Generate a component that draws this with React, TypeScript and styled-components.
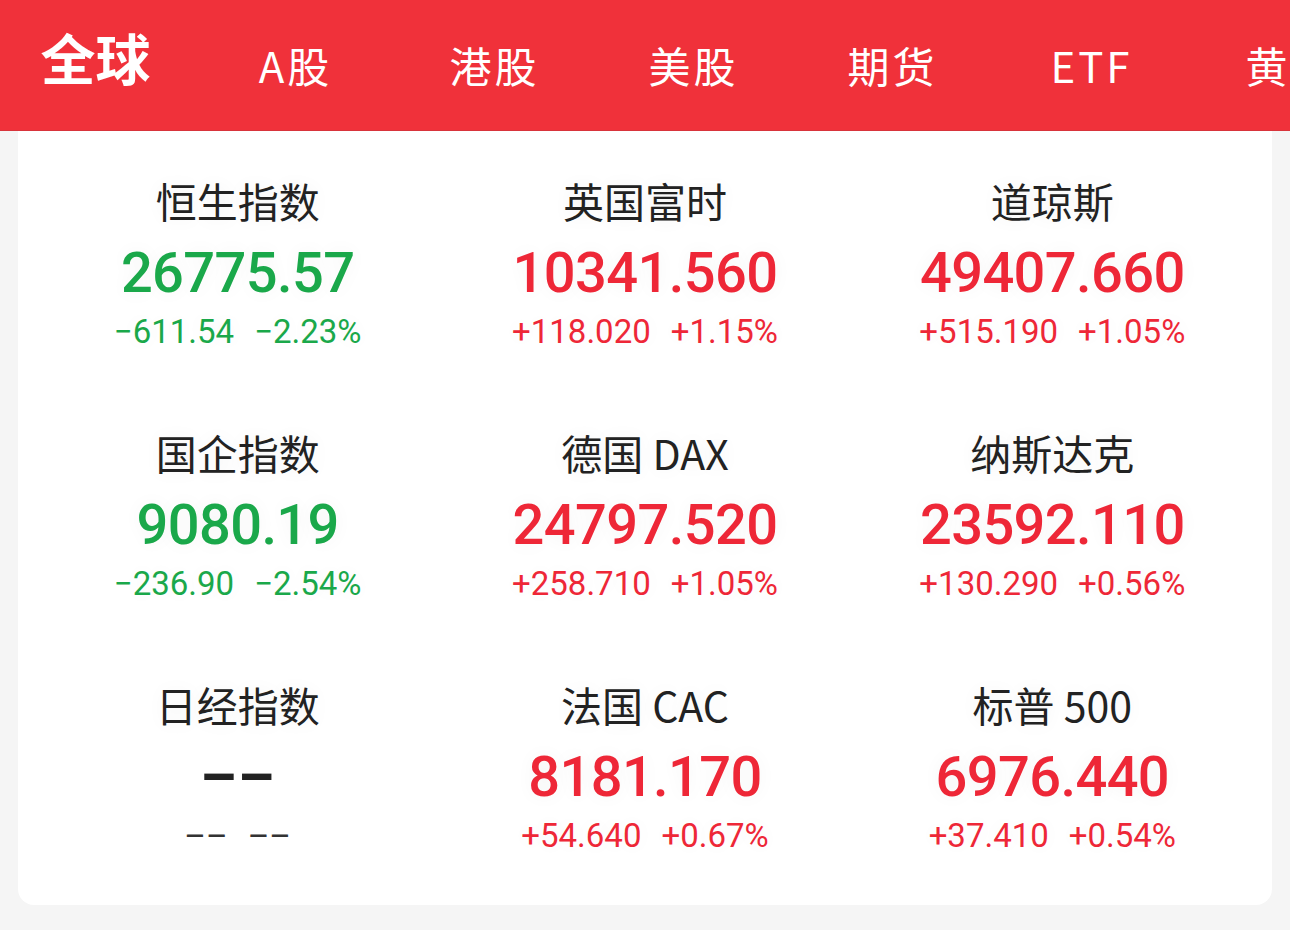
import React from "react";
import styled, { createGlobalStyle } from "styled-components";

const GlobalStyle = createGlobalStyle`
  html, body {
    margin: 0;
    padding: 0;
    background: #f5f5f5;
    font-family: Roboto, "Noto Sans CJK SC", sans-serif;
  }
`;

const Page = styled.div`
  width: 1290px;
  height: 930px;
  overflow: hidden;
  background: #f5f5f5;
`;

const TabBar = styled.nav`
  height: 130px;
  background: #f0313a;
  display: flex;
  align-items: center;
  border-bottom: 1px solid #d8343b;
  white-space: nowrap;
  overflow: hidden;
`;

const Tab = styled.div<{ $active?: boolean }>`
  flex: 0 0 199px;
  text-align: center;
  color: #fff;
  font-family: "Noto Sans CJK SC", sans-serif;
  font-size: ${(p) => (p.$active ? "55px" : "42px")};
  font-weight: ${(p) => (p.$active ? 700 : 400)};
  letter-spacing: ${(p) => (p.$active ? "0" : "3px")};
  text-indent: ${(p) => (p.$active ? "0" : "2px")};
  margin-top: ${(p) => (p.$active ? "-18px" : "-2px")};
  margin-left: ${(p) => (p.$active ? "-4px" : "0")};
`;

const Card = styled.section`
  margin: 0 18px;
  background: #fff;
  border-radius: 0 0 16px 16px;
  padding: 14px 16px 4px;
  display: grid;
  grid-template-columns: repeat(3, 1fr);
`;

const Cell = styled.div`
  height: 252px;
  display: flex;
  flex-direction: column;
  align-items: center;
`;

const Name = styled.div`
  font-family: "Noto Sans CJK SC", sans-serif;
  font-size: 41px;
  line-height: 1;
  color: #222;
  margin-top: 35px;
  white-space: pre;
  text-shadow: 0 0 18px rgba(0, 0, 0, 0.06);
`;

const Price = styled.div<{ $tone: string }>`
  font-family: Roboto, sans-serif;
  font-size: 56px;
  font-weight: 500;
  letter-spacing: -0.6px;
  line-height: 1;
  color: ${(p) => p.$tone};
  margin-top: 24px;
  text-shadow: 0 0 18px rgba(0, 0, 0, 0.05);
`;

const Dash = styled.div`
  font-family: Roboto, sans-serif;
  font-size: 58px;
  font-weight: 700;
  letter-spacing: 1px;
  line-height: 1;
  color: #222;
  margin-top: 23px;
`;

const Change = styled.div<{ $tone: string }>`
  font-family: Roboto, sans-serif;
  font-size: 33px;
  line-height: 1;
  color: ${(p) => p.$tone};
  margin-top: 14px;
  display: flex;
  gap: 20px;
  text-shadow: 0 0 18px rgba(0, 0, 0, 0.05);
`;

const GREEN = "#1aa84a";
const RED = "#ee2737";
const FLAT = "#333";

interface Quote {
  name: string;
  price: string;
  diff: string;
  pct: string;
}

const quotes: Quote[] = [
  { name: "恒生指数", price: "26775.57", diff: "−611.54", pct: "−2.23%" },
  { name: "英国富时", price: "10341.560", diff: "+118.020", pct: "+1.15%" },
  { name: "道琼斯", price: "49407.660", diff: "+515.190", pct: "+1.05%" },
  { name: "国企指数", price: "9080.19", diff: "−236.90", pct: "−2.54%" },
  { name: "德国 DAX", price: "24797.520", diff: "+258.710", pct: "+1.05%" },
  { name: "纳斯达克", price: "23592.110", diff: "+130.290", pct: "+0.56%" },
  { name: "日经指数", price: "", diff: "––", pct: "––" },
  { name: "法国 CAC", price: "8181.170", diff: "+54.640", pct: "+0.67%" },
  { name: "标普 500", price: "6976.440", diff: "+37.410", pct: "+0.54%" },
];

const toneOf = (q: Quote) =>
  q.diff.startsWith("+") ? RED : q.diff.startsWith("−") ? GREEN : FLAT;

const tabs = ["全球", "A股", "港股", "美股", "期货", "ETF", "黄金"];

const App: React.FC = () => {
  return (
    <Page>
      <GlobalStyle />
      <TabBar>
        {tabs.map((t, i) => (
          <Tab key={t} $active={i === 0}>
            {t}
          </Tab>
        ))}
      </TabBar>
      <Card>
        {quotes.map((q) => {
          const tone = toneOf(q);
          return (
            <Cell key={q.name}>
              <Name>{q.name}</Name>
              {q.price ? (
                <Price $tone={tone}>{q.price}</Price>
              ) : (
                <Dash>––</Dash>
              )}
              <Change $tone={tone}>
                <span>{q.diff}</span>
                <span>{q.pct}</span>
              </Change>
            </Cell>
          );
        })}
      </Card>
    </Page>
  );
};

export default App;
